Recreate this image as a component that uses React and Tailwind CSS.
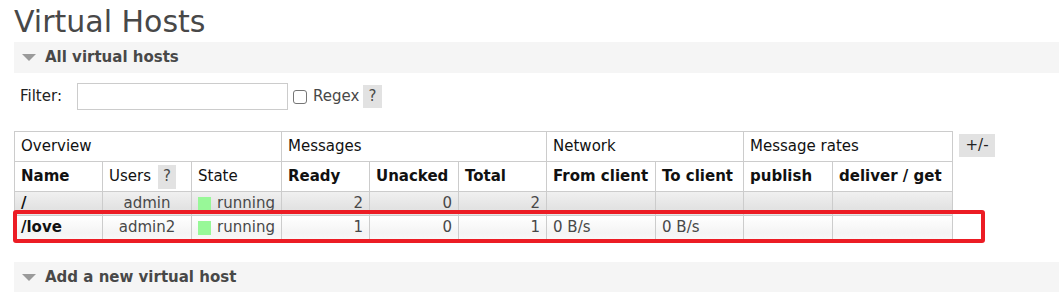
import React from 'react';

const cols = [88, 89, 90, 88, 89, 88, 109, 88, 89, 120];

const rows = [
  { name: '/', users: 'admin', ready: '2', unacked: '0', total: '2', from: '', to: '', alt: 'bg-[linear-gradient(#f0f0f0,#e2e2e2_70%,#e8e8e8)]' },
  { name: '/love', users: 'admin2', ready: '1', unacked: '0', total: '1', from: '0 B/s', to: '0 B/s', alt: 'bg-[linear-gradient(#ffffff,#f4f4f4_70%,#f8f8f8)]' },
];

const SectionHeader = ({ title }) => (
  <div className="ml-[14px] h-[31px] bg-[#f5f5f5] flex items-center">
    <span className="ml-[8px] w-0 h-0 border-l-[7px] border-r-[7px] border-t-[7px] border-l-transparent border-r-transparent border-t-[#9a9a9a]" />
    <span className="ml-[9px] font-bold text-[15px] text-[#484848]">{title}</span>
  </div>
);

const Help = ({ className = '' }) => (
  <span className={`inline-flex items-center justify-center bg-[#e2e2e2] text-[#484848] ${className}`}>?</span>
);

const App = () => {
  const th = 'border border-[#cccccc] px-[6px] text-left font-normal';
  const td = 'border border-[#cccccc] px-[6px] text-[#484848]';
  return (
    <div className="relative w-[1059px] h-[292px] overflow-hidden bg-white text-[15px] text-[#111]" style={{ fontFamily: '"DejaVu Sans", Verdana, sans-serif' }}>
      <h1 className="ml-[14px] pt-[4px] h-[42px] text-[30px] leading-[36px] text-[#484848]">Virtual Hosts</h1>
      <SectionHeader title="All virtual hosts" />

      <div className="flex items-center mt-[10px] h-[27px]">
        <span className="ml-[20px] w-[57px] text-[#222]">Filter:</span>
        <input className="w-[211px] h-[27px] border border-[#cccccc] bg-white" />
        <span className="ml-[5px] w-[14px] h-[14px] rounded-[3px] border border-[#767676] bg-white" />
        <span className="ml-[6px] w-[50px] text-[#484848]">Regex</span>
        <Help className="w-[19px] h-[23px]" />
      </div>

      <div className="flex items-start mt-[21px] ml-[14px]">
        <table className="table-fixed border-collapse" style={{ width: 938 }}>
          <colgroup>
            {cols.map((w, i) => (
              <col key={i} style={{ width: w }} />
            ))}
          </colgroup>
          <thead>
            <tr className="h-[30px]">
              <th colSpan={3} className={th}>Overview</th>
              <th colSpan={3} className={th}>Messages</th>
              <th colSpan={2} className={th}>Network</th>
              <th colSpan={2} className={th}>Message rates</th>
            </tr>
            <tr className="h-[30px]">
              <th className={`${th} !font-bold`}>Name</th>
              <th className={th}>
                <span className="flex items-center">
                  Users
                  <Help className="ml-[7px] w-[18px] h-[24px]" />
                </span>
              </th>
              <th className={th}>State</th>
              <th className={`${th} !font-bold`}>Ready</th>
              <th className={`${th} !font-bold`}>Unacked</th>
              <th className={`${th} !font-bold`}>Total</th>
              <th className={`${th} !font-bold`}>From client</th>
              <th className={`${th} !font-bold`}>To client</th>
              <th className={`${th} !font-bold`}>publish</th>
              <th className={`${th} !font-bold`}>deliver / get</th>
            </tr>
          </thead>
          <tbody>
            {rows.map((r) => (
              <tr key={r.name} className={`h-[24px] ${r.alt}`}>
                <td className={`${td} font-bold !text-[#111]`}>{r.name}</td>
                <td className={`${td} text-center`}>{r.users}</td>
                <td className={td}>
                  <span className="flex items-center">
                    <span className="w-[14px] h-[14px] bg-[#98f898]" />
                    <span className="ml-[6px]">running</span>
                  </span>
                </td>
                <td className={`${td} text-right`}>{r.ready}</td>
                <td className={`${td} text-right`}>{r.unacked}</td>
                <td className={`${td} text-right`}>{r.total}</td>
                <td className={td}>{r.from}</td>
                <td className={td}>{r.to}</td>
                <td className={td}></td>
                <td className={td}></td>
              </tr>
            ))}
          </tbody>
        </table>
        <span className="ml-[6px] mt-[3px] w-[36px] h-[23px] flex items-center justify-center bg-[#e2e2e2] text-[#222]">+/-</span>
      </div>

      <div className="mt-[22px]">
        <SectionHeader title="Add a new virtual host" />
      </div>

      <div className="absolute left-[13px] top-[210px] w-[972px] h-[33px] border-[4px] border-[#ec1c24] rounded-[3px]" />
    </div>
  );
};

export default App;
